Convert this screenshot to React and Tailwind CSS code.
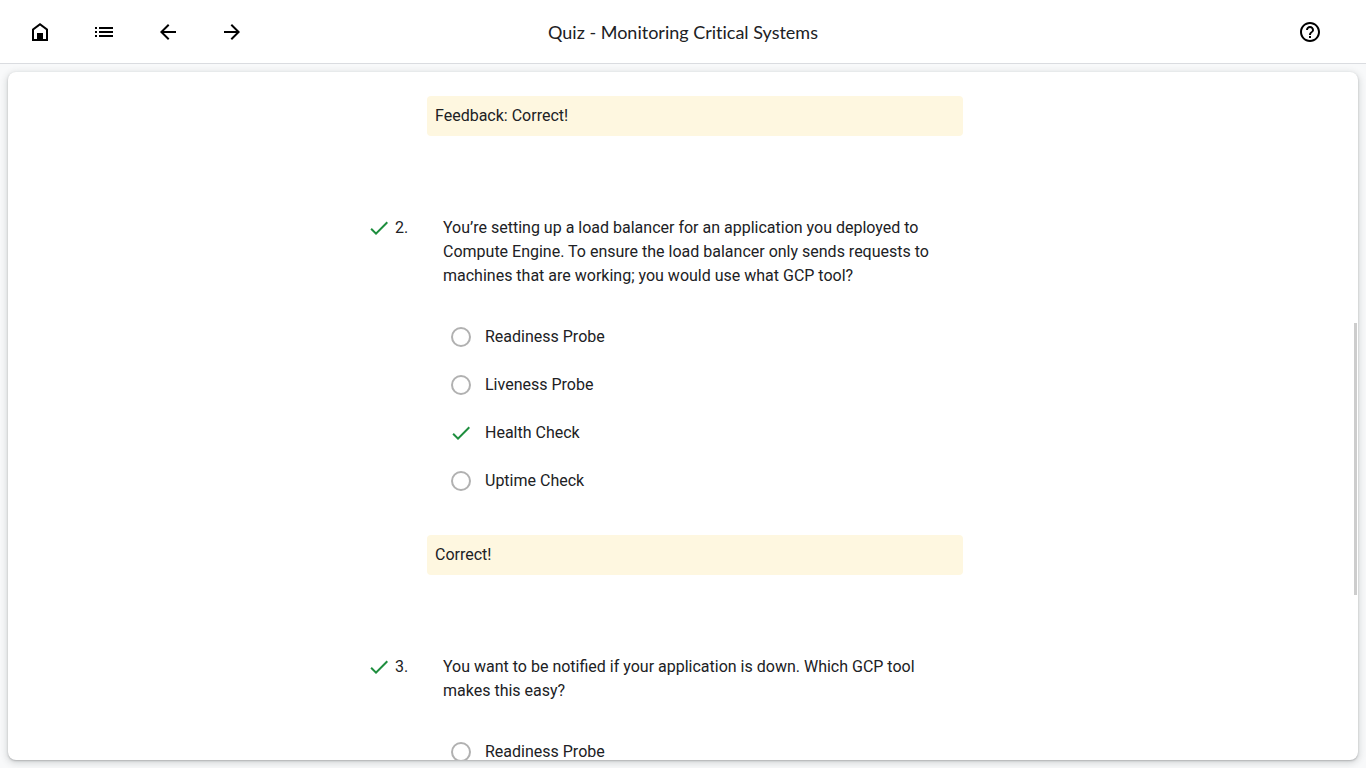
import React from "react";

const ICONS = {
  home: "M4 21V9l8-6 8 6v12H4zM6 10v9h3v-6h6v6h3v-9l-6-4.5L6 10z",
  list: "M3 13h2v-2H3v2zm0 4h2v-2H3v2zm0-8h2V7H3v2zm4 4h14v-2H7v2zm0 4h14v-2H7v2zM7 7v2h14V7H7z",
  back: "M20 11H7.83l5.59-5.59L12 4l-8 8 8 8 1.41-1.41L7.83 13H20v-2z",
  forward: "M12 4l-1.41 1.41L16.17 11H4v2h12.17l-5.58 5.59L12 20l8-8-8-8z",
  help: "M11 18h2v-2h-2v2zm1-16C6.48 2 2 6.48 2 12s4.48 10 10 10 10-4.48 10-10S17.52 2 12 2zm0 18c-4.41 0-8-3.59-8-8s3.59-8 8-8 8 3.59 8 8-3.59 8-8 8zm0-14c-2.21 0-4 1.79-4 4h2c0-1.1.9-2 2-2s2 .9 2 2c0 2-3 1.75-3 5h2c0-2.25 3-2.5 3-5 0-2.21-1.79-4-4-4z",
  check: "M9 16.17L4.83 12l-1.42 1.41L9 19 21 7l-1.41-1.41z",
};

function Icon({ name, className = "" }) {
  return (
    <svg viewBox="0 0 24 24" fill="currentColor" aria-hidden="true" className={`size-6 shrink-0 ${className}`}>
      <path d={ICONS[name]} />
      {name === "home" && <path d="M9 13h6v7H9z" />}
    </svg>
  );
}

function IconButton({ icon, label }) {
  return (
    <button type="button" aria-label={label} className="flex size-12 items-center justify-center rounded-full text-black">
      <Icon name={icon} />
    </button>
  );
}

function Feedback({ children }) {
  return <div className="ml-16 mr-10 rounded-sm bg-[#fef7e0] p-2">{children}</div>;
}

function Option({ id, name, text, correct }) {
  return (
    <div className="flex h-12 items-center gap-3">
      <span className="grid size-6 place-items-center">
        <input
          id={id}
          type="radio"
          name={name}
          defaultChecked={correct}
          className={`col-start-1 row-start-1 size-5 appearance-none rounded-full ${correct ? "" : "border-2 border-[#b1b1b1]"}`}
        />
        {correct && <Icon name="check" className="col-start-1 row-start-1 text-[#1e8e3e]" />}
      </span>
      <label htmlFor={id}>{text}</label>
    </div>
  );
}

function Question({ number, text, options, answer, feedback }) {
  return (
    <section className="mb-20">
      <div className="flex pl-1 pr-14">
        <Icon name="check" className="mr-1 text-[#1e8e3e]" />
        <span className="w-12 shrink-0">{number}.</span>
        <p id={`q${number}-text`}>{text}</p>
      </div>
      <fieldset aria-labelledby={`q${number}-text`} className="mb-[30px] ml-[86px] mt-[25px]">
        {options.map((o, i) => (
          <Option key={o} id={`q${number}-${i}`} name={`q${number}`} text={o} correct={o === answer} />
        ))}
      </fieldset>
      <Feedback>{feedback}</Feedback>
    </section>
  );
}

const OPTIONS = ["Readiness Probe", "Liveness Probe", "Health Check", "Uptime Check"];

export default function App() {
  return (
    <div className="flex h-screen flex-col bg-[#f8f9fa] font-['Roboto',sans-serif] text-base text-[#202124]">
      <header className="flex h-16 shrink-0 items-center border-b border-[#dadce0] bg-white px-4">
        <nav className="flex flex-1 gap-4 pr-4">
          <IconButton icon="home" label="Home" />
          <IconButton icon="list" label="Contents" />
          <IconButton icon="back" label="Previous" />
          <IconButton icon="forward" label="Next" />
        </nav>
        <h1 className="font-['Lato',sans-serif] text-lg leading-6 [font-variant-ligatures:none]">
          Quiz - Monitoring Critical Systems
        </h1>
        <div className="flex flex-1 justify-end pr-4">
          <IconButton icon="help" label="Help" />
        </div>
      </header>
      <main className="relative m-2 flex min-h-0 flex-1 flex-col overflow-hidden rounded-lg bg-white shadow-[0_1px_2px_0_rgba(60,64,67,0.3),0_2px_6px_2px_rgba(60,64,67,0.15)]">
        <div className="min-h-0 flex-1 overflow-y-auto [scrollbar-width:none]">
          <div className="mx-auto max-w-[640px] pt-6">
            <Feedback>Feedback: Correct!</Feedback>
            <div className="h-20" />
            <Question
              number={2}
              text="You’re setting up a load balancer for an application you deployed to Compute Engine. To ensure the load balancer only sends requests to machines that are working; you would use what GCP tool?"
              options={OPTIONS}
              answer="Health Check"
              feedback="Correct!"
            />
            <Question
              number={3}
              text="You want to be notified if your application is down. Which GCP tool makes this easy?"
              options={OPTIONS}
              answer="Uptime Check"
              feedback="Correct!"
            />
          </div>
        </div>
        <div className="absolute right-px top-[251px] h-[272px] w-[3px] bg-[#cdcdcd]" />
      </main>
    </div>
  );
}
